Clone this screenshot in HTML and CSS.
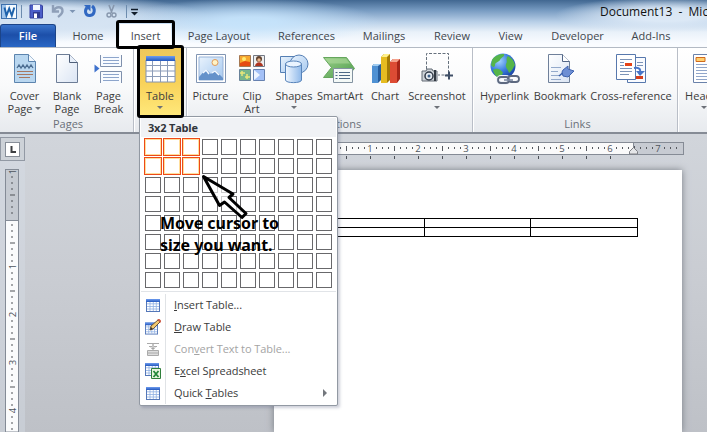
FILE: index.html
```html
<!DOCTYPE html>
<html lang="en">
<head>
<meta charset="utf-8">
<title>Document13 - Microsoft Word</title>
<link rel="stylesheet" href="styles.css">
</head>
<body>
<svg class="defs" width="0" height="0">
  <defs>
    <linearGradient id="gBlue" x1="0" y1="0" x2="0" y2="1"><stop offset="0" stop-color="#6f9df0"/><stop offset="1" stop-color="#2458bd"/></linearGradient>
    <linearGradient id="gPage" x1="0" y1="0" x2="1" y2="1"><stop offset="0" stop-color="#fff"/><stop offset="1" stop-color="#dbe5f4"/></linearGradient>
    <linearGradient id="gSky" x1="0" y1="0" x2="1" y2="1"><stop offset="0" stop-color="#e9f3fd"/><stop offset="1" stop-color="#a5c8ef"/></linearGradient>
    <linearGradient id="gCyl" x1="0" y1="0" x2="1" y2="0"><stop offset="0" stop-color="#f2f8ff"/><stop offset="1" stop-color="#8fb9ea"/></linearGradient>
    <linearGradient id="gGreen" x1="0" y1="0" x2="1" y2="1"><stop offset="0" stop-color="#9bd08a"/><stop offset="1" stop-color="#4c9b4b"/></linearGradient>
    <radialGradient id="gGlobe" cx=".35" cy=".3" r=".8"><stop offset="0" stop-color="#a4d4ff"/><stop offset=".5" stop-color="#3c7ee0"/><stop offset="1" stop-color="#123a9c"/></radialGradient>
    <symbol id="grid" viewBox="0 0 14 13"><rect x=".5" y=".5" width="13" height="12" fill="#fff" stroke="#5477b8"/><path d="M1 4.8h12M1 7.5h12M1 10h12M4 3v9M7.300 3v9M10.300 3v9" stroke="#8fb0e3" stroke-width=".8"/><path d="M0 0h14v3H0z" fill="url(#gBlue)"/></symbol>
  </defs>
</svg>
<div class="window">
  <header class="titlebar">
    <svg class="quick" width="142" height="24" viewBox="0 0 142 24">
      <rect x="1.500" y="4.500" width="15" height="14" fill="#f5faff" stroke="#3d70ad"/><path d="M2 5h4v13H2z" fill="#9fc4eb"/>
      <path d="M4.500 7.500l2 8 2.700-7 2.600 7 2.500-8" fill="none" stroke="#1d62ac" stroke-width="2"/>
      <path d="M21.500 5v13M126.500 5v13" stroke="#6d8cae"/>
      <path d="M30 5h11.500l1 1v12H30z" fill="#4c5fc9" stroke="#34419d"/><path d="M33 5h7v5h-7z" fill="#f2f6ff"/><path d="M33 12h7v6h-7z" fill="#303c92"/><path d="M34 13.500h3V18h-3z" fill="#fff"/>
      <path d="M53 5v6.500h6M53.500 11c2-5 9-5 9 0 0 3-2 4-4.500 6" fill="none" stroke="#8e9fb8" stroke-width="2.400"/>
      <path d="M69.500 10h6l-3 3z" fill="#7d94b3"/>
      <path d="M87 7.500c-3 4-1 8.500 3 8 5-.5 5.500-7 2-9.500" fill="none" stroke="#3168c2" stroke-width="3"/><path d="M84 5h6.500v6.500z" fill="#3168c2"/>
      <path d="M109 5l3 8M114 5l-3 8" stroke="#8797ad" stroke-width="1.600"/><circle cx="109" cy="15" r="2" fill="none" stroke="#8797ad" stroke-width="1.400"/><circle cx="114" cy="15" r="2" fill="none" stroke="#8797ad" stroke-width="1.400"/>
      <path d="M131 9.500h7" stroke="#111d2b" stroke-width="1.500"/><path d="M131 12h7l-3.500 3.500z" fill="#111d2b"/>
    </svg>
    <span class="doc-name">Document13&nbsp; -&nbsp; Microsoft Word</span>
  </header>
  <nav class="tabs">
    <span class="tab file">File</span>
    <span class="tab w-home">Home</span>
    <span class="tab active">Insert</span>
    <span class="tab w-layout">Page Layout</span>
    <span class="tab w-ref">References</span>
    <span class="tab w-mail">Mailings</span>
    <span class="tab w-review">Review</span>
    <span class="tab w-view">View</span>
    <span class="tab w-dev">Developer</span>
    <span class="tab w-add">Add-Ins</span>
  </nav>
  <section class="ribbon">
    <div class="group g-pages">
      <div class="buttons">
        <div class="btn b43"><svg viewBox="0 0 32 32"><path d="M5.500 1.500h14l7 7v21h-21z" fill="#b9d7f0" stroke="#5c84ae"/><path d="M19.500 1.500v7h7" fill="#f2f8fe" stroke="#5c84ae"/><path d="M8 15l2-3 2 3 2-3 2 3 2-3 2 3 2-3 2 3" fill="none" stroke="#4c6d91" stroke-width="1.300"/><path d="M8 18.500h16M8 21.500h16M10 24.500h11" stroke="#a87860"/></svg><span>Cover<br>Page<i class="inline-caret"></i></span></div>
        <div class="btn b42"><svg viewBox="0 0 32 32"><path d="M5.500 1.500h13l8 8v20h-21z" fill="url(#gPage)" stroke="#6d7d96"/><path d="M18.500 1.500v8h8" fill="#e9f0fa" stroke="#4f5f79"/></svg><span>Blank<br>Page</span></div>
        <div class="btn b41"><svg viewBox="0 0 32 32"><path d="M7.500 2v11.500h21V2M7.500 30V18.500h21V30" fill="#f8fbff" stroke="#7f90ac"/><path d="M10 4.500h16M10 7.500h16M10 10.500h16M10 21.500h16M10 24.500h16M10 27.500h16" stroke="#8da5cb"/><path d="M1.500 11.500l5 4-5 4z" fill="#3f72cd"/></svg><span>Page<br>Break</span></div>
      </div>
      <div class="caption">Pages</div>
    </div>
    <div class="group g-tables">
      <div class="buttons">
        <div class="btn b42 pressed"><svg viewBox="0 0 32 32"><path d="M2 7h29v22H2z" fill="#fff" stroke="#8392b0"/><path d="M2 12.500h29M2 18h29M2 23.500h29M8.500 7v22M16.500 7v22M23.500 7v22" stroke="#8c9cb8"/><path d="M2 3h29v5H2z" fill="url(#gBlue)"/></svg><span>Table</span><i class="caret"></i></div>
      </div>
    </div>
    <div class="group g-illus">
      <div class="buttons">
        <div class="btn b41"><svg viewBox="0 0 32 32"><path d="M1.500 1.500h29v28h-29z" fill="#fff" stroke="#8195b3"/><path d="M4 4h24v23H4z" fill="url(#gSky)" stroke="#98b3d8"/><circle cx="20" cy="9.500" r="3" fill="#fff3c5" stroke="#df9b5c"/><path d="M4 24l7-8 5 5 4-4 8 8v2H4z" fill="#6592ca"/><path d="M8 20l3-3 3 4M17 20l3-2 4 4" fill="none" stroke="#f2f8ff" stroke-width="1.500"/></svg><span>Picture</span></div>
        <div class="btn b42"><svg viewBox="0 0 32 32"><path d="M3.500 2.500h11v11h-11z" fill="#f7a62d" stroke="#a57852"/><path d="M4 10l5-2 5 1v4H4z" fill="#e54b13"/><circle cx="8" cy="6" r="2" fill="#ffea70"/><path d="M17.500 2.500h11v11h-11z" fill="#eee" stroke="#737984"/><circle cx="23" cy="6" r="3" fill="#62432f"/><circle cx="23" cy="7" r="1.700" fill="#efb98d"/><path d="M19 13c1-5 7-5 8 0z" fill="#ae3520"/><path d="M3.500 16.500h11v11h-11z" fill="#77b68a" stroke="#69839a"/><path d="M6 18v5M4 20h5M11 21v5M9 24h5" stroke="#e9e87a" stroke-width="1.500"/><path d="M17.500 16.500h11v11h-11z" fill="#a4c1f7" stroke="#6681b0"/><path d="M18 17l6 5-6 5" fill="#edf4ff"/></svg><span>Clip<br>Art</span></div>
        <div class="btn b42"><svg viewBox="0 0 32 32"><path d="M2.500 3.500h17v16h-17z" fill="url(#gSky)" stroke="#557fb4"/><circle cx="21" cy="11" r="9" fill="url(#gSky)" stroke="#557fb4"/><path d="M7.500 11v16c0 3.500 16 3.500 16 0V11z" fill="url(#gCyl)" stroke="#5884ba"/><ellipse cx="15.500" cy="11" rx="8" ry="3" fill="#eaf4ff" stroke="#5884ba"/></svg><span>Shapes</span><i class="caret"></i></div>
        <div class="btn b50"><svg class="shift-left" viewBox="0 0 32 32"><path d="M.5 4.500h23l8 11-8 9H.5l8-10z" fill="url(#gGreen)" stroke="#65a65d"/><path d="M2 5.500h21l4 5H6z" fill="#add89b" opacity=".6"/><path d="M10.500 15.500h19v14h-19z" fill="#f4f9f7" stroke="#8393a1"/><path d="M16 19.500h11M16 22.500h11M16 25.500h11" stroke="#4d6986"/><path d="M12.500 19.500h2M12.500 22.500h2M12.500 25.500h2" stroke="#4d6986"/></svg><span>SmartArt</span></div>
        <div class="btn b40"><svg viewBox="0 0 32 32"><path d="M3 13l2-2h7v16l-3 3H3z" fill="#265d9d"/><path d="M3 13h6v17H3z" fill="#4f91d3"/><path d="M3 13l2-2h7l-3 2z" fill="#a1cdf1"/><path d="M12 4l3-3h6v26l-3 3h-6z" fill="#a47c05"/><path d="M12 4h6v26h-6z" fill="#e5bc21"/><path d="M12 4l3-3h6l-3 3z" fill="#fff08a"/><path d="M21 9l3-3h7v20l-3 4h-7z" fill="#a62518"/><path d="M21 9h7v21h-7z" fill="#dd4b34"/><path d="M21 9l3-3h7l-3 3z" fill="#f5a18b"/></svg><span>Chart</span></div>
        <div class="btn b64"><svg viewBox="0 0 32 32"><path d="M5.500 16V.5h22V22H17" fill="none" stroke="#66717d" stroke-dasharray="3 1.500"/><path d="M24 22.500h8M28 18.500v8" stroke="#3f4f66" stroke-width="2"/><path d="M1 18h4l1-2h5l1 2h4v10H1z" fill="#cdd2d7" stroke="#626a74"/><circle cx="8" cy="23" r="4" fill="#e5eaf0" stroke="#323b48" stroke-width="1.500"/><circle cx="8" cy="23" r="1.500" fill="#3c5f87"/><path d="M14 17v11" stroke="#313841" stroke-width="2"/></svg><span>Screenshot</span><i class="caret"></i></div>
      </div>
      <div class="caption">Illustrations</div>
    </div>
    <div class="group g-links">
      <div class="buttons">
        <div class="btn b53"><svg viewBox="0 0 32 32"><circle cx="14" cy="13" r="12.500" fill="url(#gGlobe)"/><path d="M3 7c3-5 8-6 12-6 1 3-3 3-4 6-1 2-5 2-5 5s-3 2-4 0zM6 16c4-1 7 2 8 4l-3 5c-4-1-6-4-7-8zM19 3c4 2 6 5 7 9-2 3-3 6-6 8-1-4-4-5-3-9 2-3-1-5 2-8z" fill="#55b54a"/><rect x="9" y="24" width="11" height="6" rx="3" fill="none" stroke="#eef2f8" stroke-width="4"/><rect x="9" y="24" width="11" height="6" rx="3" fill="none" stroke="#5d6980" stroke-width="1.800"/><rect x="19" y="23" width="11" height="6" rx="3" fill="none" stroke="#5d6980" stroke-width="1.800"/><path d="M15 27h9" stroke="#7f8ca5" stroke-width="1.600"/></svg><span>Hyperlink</span></div>
        <div class="btn b58"><svg viewBox="0 0 32 32"><path d="M4.500 1.500h14l7 7v21h-21z" fill="url(#gPage)" stroke="#6f809a"/><path d="M18.500 1.500v7h7" fill="#fff" stroke="#536787"/><path d="M7 14.500h10M7 18.500h7M7 22.500h9M7 26.500h10" stroke="#93a9cb"/><path d="M15 23l6-5" stroke="#355ca9" stroke-width="1.500"/><path d="M19 17l5-4v3l6 2-6 6-5-1-1-4z" fill="#6e8fd4" stroke="#3e63af"/></svg><span>Bookmark</span></div>
        <div class="btn b84"><svg viewBox="0 0 32 32"><path d="M12.500 4.500h18v25h-18z" fill="#f9fbff" stroke="#5778ad"/><path d="M20 23h8v3h-8z" fill="#d53e1c"/><path d="M1.500 1.500h19v25h-19z" fill="#fff" stroke="#5778ad"/><path d="M5 6.500h12M5 9.500h4M5 12.500h4M5 15.500h12M5 18.500h12M5 21.500h9M22 9.500h6M22 12.500h6" stroke="#7c93b7"/><path d="M10 10h7v3h-7z" fill="#e64317"/><path d="M19 15c6-1 7 2 6 5" fill="none" stroke="#4875c8" stroke-width="2"/><path d="M21 18l9 0-5 5z" fill="#4875c8"/></svg><span>Cross-reference</span></div>
      </div>
      <div class="caption">Links</div>
    </div>
    <div class="group g-header">
      <div class="buttons">
        <div class="btn b42"><svg viewBox="0 0 32 32"><path d="M5.500 1.500h22v28h-22z" fill="#fff" stroke="#6a82aa"/><path d="M8 4.500h9v4H8z" fill="#ffd071" stroke="#d16a1c"/><path d="M8 11.500h16M8 14.500h16M8 17.500h16M8 20.500h16M8 23.500h16M8 26.500h16" stroke="#91a6ca"/></svg><span>Header</span><i class="caret"></i></div>
      </div>
    </div>
  </section>
  <main class="workspace">
    <aside class="left-rail">
      <div class="tab-stop"><div class="tab-stop-face"><svg width="13" height="13" viewBox="0 0 13 13"><path d="M5.500 3v6H10" fill="none" stroke="#3e4043" stroke-width="2"/></svg></div></div>
      <svg class="v-ruler" width="14" height="263" viewBox="0 0 14 263">
        <defs><pattern id="vt" y="1.500" width="14" height="48" patternUnits="userSpaceOnUse"><path d="M6 6.500h2M6 12.500h2M6 18.500h2M5 24.500h5M6 30.500h2M6 36.500h2M6 42.500h2" stroke="#4e5156"/></pattern></defs>
        <rect x=".5" y=".5" width="13" height="262.500" fill="#fafbfc" stroke="#848b96"/><path d="M1 1h12v50H1z" fill="#c5cad1"/><path d="M0 51.500h14" stroke="#848b96"/>
        <path d="M0 1.500h14v261.500H0z" fill="url(#vt)"/>
        <g class="ruler-num"><text transform="translate(11 2.500) rotate(-90)">1</text><text transform="translate(11 97.500) rotate(-90)">1</text><text transform="translate(11 145.500) rotate(-90)">2</text><text transform="translate(11 193.500) rotate(-90)">3</text><text transform="translate(11 241.500) rotate(-90)">4</text></g>
      </svg>
    </aside>
    <div class="canvas">
      <svg class="h-ruler" width="411" height="19" viewBox="0 0 411 19">
        <defs><pattern id="ht" x="0" width="48" height="19" patternUnits="userSpaceOnUse"><path d="M6.500 5v2M12.500 5v2M18.500 5v2M24.500 4v5M30.500 5v2M36.500 5v2M42.500 5v2" stroke="#55585e"/></pattern><pattern id="lt" width="24" height="19" patternUnits="userSpaceOnUse"><path d="M.5 14v3" stroke="#4b4f56"/></pattern></defs>
        <rect x=".5" y=".5" width="409" height="12" fill="#fafafa" stroke="#858b95"/><path d="M360 1h49v11h-49z" fill="#c7cbd2"/><path d="M359.500 0v12" stroke="#858b95"/>
        <path d="M47 0h357v12H47z" fill="url(#ht)"/><path d="M47 13h290v6H47z" fill="url(#lt)"/>
        <g class="ruler-num"><text x="96" y="10">1</text><text x="144" y="10">2</text><text x="192" y="10">3</text><text x="240" y="10">4</text><text x="288" y="10">5</text><text x="336" y="10">6</text><text x="384" y="10">7</text></g>
        <path d="M355.500 12v-2.500l4-4 4 4V12z" fill="#e5e6e8" stroke="#7e8085"/>
      </svg>
      <article class="page">
        <table class="doc-table"><colgroup><col class="c-side"><col class="c-side"><col></colgroup><tr><td></td><td></td><td></td></tr><tr><td></td><td></td><td></td></tr></table>
      </article>
    </div>
  </main>
  <div class="menu">
    <div class="menu-title">3x2 Table</div>
    <div class="cells" id="cells"></div>
    <div class="menu-items">
      <div class="item"><div class="ico"><svg width="14" height="13"><use href="#grid"/></svg></div><span><u>I</u>nsert Table...</span></div>
      <div class="item"><div class="ico"><svg width="16" height="16" viewBox="0 0 16 16"><svg y="3" width="13" height="13"><use href="#grid"/></svg><path d="M5 11l1-4 7-6 2 2-7 7z" fill="#f2c96f" stroke="#6c563b"/><path d="M5 11l1-3 2 2z" fill="#333"/><path d="M13 0l3 3" stroke="#ce5f4b" stroke-width="2"/></svg></div><span><u>D</u>raw Table</span></div>
      <div class="item disabled"><div class="ico"><svg width="14" height="15" viewBox="0 0 14 15"><path d="M1 1.500h12M3 4.500h3M8 4.500h3" stroke="#aaa"/><path d="M7 2v5M5 5.500l2 2 2-2" fill="none" stroke="#888"/><path d="M1.500 8.500h11v5h-11zM1 11h12" fill="#ddd" stroke="#aaa"/></svg></div><span>Con<u>v</u>ert Text to Table...</span></div>
      <div class="item"><div class="ico"><svg width="16" height="16" viewBox="0 0 16 16"><svg width="14" height="13"><use href="#grid"/></svg><path d="M6.500 5.500h9v10h-9z" fill="#e9f5df" stroke="#2f7f3a"/><path d="M8.500 8l5 6M13.500 8l-5 6" stroke="#24883a" stroke-width="1.800"/></svg></div><span>E<u>x</u>cel Spreadsheet</span></div>
      <div class="item"><div class="ico"><svg width="14" height="13"><use href="#grid"/></svg></div><span>Quick <u>T</u>ables</span><i class="submenu"></i></div>
    </div>
  </div>
  <div class="callout callout-tab"></div>
  <div class="callout callout-table"></div>
  <svg class="pointer" width="50" height="50" viewBox="0 0 50 50"><path d="M3.500 3.500L33 21l-4 3.500L46 40.500l-4 4L24.500 29l-5 3.500z" fill="#fff" fill-opacity=".65" stroke="#000" stroke-width="3" stroke-linejoin="round"/></svg>
  <div class="note">Move cursor to<br>size you want.</div>
</div>
<script src="script.js"></script>
</body>
</html>
```
FILE: styles.css
```css
* { box-sizing: border-box; }
body { margin: 0; overflow: hidden; font-family: "Open Sans", "Noto Sans", sans-serif; font-size: 11px; color: #3b3b3b; }
.defs { position: absolute; }
.window { position: relative; width: 707px; height: 432px; overflow: hidden; display: flex; flex-direction: column;
  background:
    radial-gradient(ellipse 130px 24px at 250px 22px, rgba(198,228,252,.9) 20%, rgba(198,228,252,0)),
    radial-gradient(ellipse 170px 24px at 40px 18px, rgba(214,228,243,.95) 45%, rgba(214,228,243,0)),
    radial-gradient(ellipse 110px 18px at 665px 15px, rgba(222,234,247,.95) 35%, rgba(222,234,247,0)),
    linear-gradient(#416791, #7599c0 10px, #b9d0e8 22px, #e9f1f9 32px, #fafcff 44px); }
.titlebar { height: 24px; flex: none; display: flex; justify-content: space-between; }
.quick { display: block; }
.doc-name { width: 107px; white-space: nowrap; font-size: 12px; line-height: 24px; color: #111; }
.tabs { height: 23px; flex: none; display: flex; }
.tab { line-height: 24px; text-align: center; white-space: nowrap; font-size: 11px; color: #41464d; }
.file { width: 56px; color: #fff; font-weight: 600; background: linear-gradient(#3a74cc, #1c4fa9 45%, #2a67c5); border: 1px solid #1c4488; border-bottom: 0; border-radius: 3px 3px 0 0; line-height: 22px; }
.w-home { width: 64px; }
.active { width: 51px; background: #fff; }
.w-layout { width: 96px; }
.w-ref { width: 79px; }
.w-mail { width: 76px; }
.w-review { width: 60px; }
.w-view { width: 57px; }
.w-dev { width: 77px; }
.w-add { width: 70px; }
.ribbon { height: 87px; flex: none; display: flex; background: linear-gradient(#fff, #f9fafb 45%, #e7eaee); border-top: 1px solid #b3bac4; border-bottom: 2px solid #858b95; }
.group { flex: none; height: 84px; display: flex; flex-direction: column; border-right: 1px solid #b9bec7; box-shadow: 1px 0 #fff; }
.g-pages { width: 134px; padding-left: 3px; }
.g-tables { width: 53px; padding-left: 5px; }
.g-illus { width: 286px; padding-left: 3px; }
.g-links { width: 205px; padding-left: 5px; }
.g-header { width: 80px; padding-left: 5px; }
.buttons { display: flex; height: 69px; }
.btn { display: flex; flex-direction: column; align-items: center; padding-top: 5px; text-align: center; line-height: 13px; white-space: nowrap; }
.btn > svg { width: 32px; height: 32px; margin-bottom: 4px; flex: none; }
.btn > .shift-left { margin-right: 2px; }
.b40 { width: 40px; } .b41 { width: 41px; } .b42 { width: 42px; } .b43 { width: 43px; } .b50 { width: 50px; } .b53 { width: 53px; } .b58 { width: 58px; } .b64 { width: 64px; } .b84 { width: 84px; }
.pressed { background: linear-gradient(#eec75c, #f8d25a 50%, #ffe97c); }
.caption { text-align: center; line-height: 16px; color: #6a7079; }
.caret, .inline-caret { width: 0; height: 0; border: 3px solid transparent; border-top-color: #6d7178; border-bottom: 0; }
.caret { margin-top: 4px; }
.inline-caret { display: inline-block; margin-left: 3px; vertical-align: 3px; }
.workspace { flex: 1; min-height: 0; display: flex; background: linear-gradient(#d1d5db, #c9ccd2 50%, #bec1c7); }
.left-rail { width: 25px; flex: none; padding-top: 3px; background: rgba(216,223,233,.4); }
.tab-stop { width: 25px; height: 24px; border: 1px solid #9299a4; padding: 4px; background: #cdd2d8; }
.tab-stop-face { width: 15px; height: 15px; border: 1px solid #878e98; background: #fff; }
.tab-stop svg { display: block; }
.v-ruler { display: block; margin: 8px 0 0 5px; }
.canvas { flex: 1; padding-top: 8px; display: flex; flex-direction: column; }
.h-ruler { display: block; margin-left: 249px; flex: none; }
.ruler-num { font-size: 9.5px; fill: #4e545d; text-anchor: middle; }
.page { width: 408px; margin: 9px 0 0 249px; flex: 1; padding: 48px 0 0 44px; background: #fff; box-shadow: 0 0 7px #777c84; }
.doc-table { width: 320px; border-collapse: collapse; table-layout: fixed; }
.c-side { width: 106px; }
.doc-table td { height: 9px; padding: 0; border: 1px solid #000; }
.menu { position: absolute; left: 139px; top: 116px; width: 199px; height: 290px; background: #fff; border: 1px solid #9299a3; border-radius: 2px; box-shadow: 2px 2px 3px rgba(90,95,130,.3); }
.menu-title { height: 19px; margin: 1px; padding-left: 7px; line-height: 20px; font-weight: 700; letter-spacing: -.2px; background: #f0f2f5; color: #30353c; }
.cells { display: grid; grid-template-columns: repeat(10, 16px); grid-auto-rows: 16px; gap: 3px; padding: 1px 5px 3px; }
.cell { border: 1px solid #68686b; background: #fff; }
.cell.on { margin: -1px; border: 1px solid #ed4a18; box-shadow: inset 0 0 0 1px #ffdf9c; }
.menu-items { margin: 0 1px; border-top: 1px solid #e1e4e8; padding-top: 2px; }
.item { height: 22px; display: flex; align-items: center; line-height: 22px; font-size: 11px; letter-spacing: -.07px; }
.ico { width: 25px; height: 22px; display: flex; align-items: center; justify-content: center; border-right: 1px solid #e0e3e6; margin-right: 8px; }
.ico svg { display: block; }
.item u { text-underline-offset: 1px; }
.disabled { color: #a4a4a4; }
.submenu { margin-left: auto; margin-right: 9px; border: 4px solid transparent; border-left: 4px solid #73777d; border-right: 0; }
.callout { position: absolute; border: 3px solid #000; border-radius: 3px; }
.callout-tab { left: 116px; top: 20px; width: 59px; height: 29px; }
.callout-table { left: 137px; top: 45px; width: 47px; height: 73px; }
.pointer { position: absolute; left: 200px; top: 173px; }
.note { position: absolute; left: 160px; top: 212px; font-family: "Noto Sans", sans-serif; font-weight: 700; font-size: 16px; letter-spacing: -.05px; line-height: 22px; color: #000; white-space: nowrap; }
```
FILE: script.js
```js
const cells = document.getElementById("cells");
for (let row = 0; row < 8; row++) {
  for (let col = 0; col < 10; col++) {
    const cell = document.createElement("div");
    cell.className = row < 2 && col < 3 ? "cell on" : "cell";
    cells.appendChild(cell);
  }
}
```
